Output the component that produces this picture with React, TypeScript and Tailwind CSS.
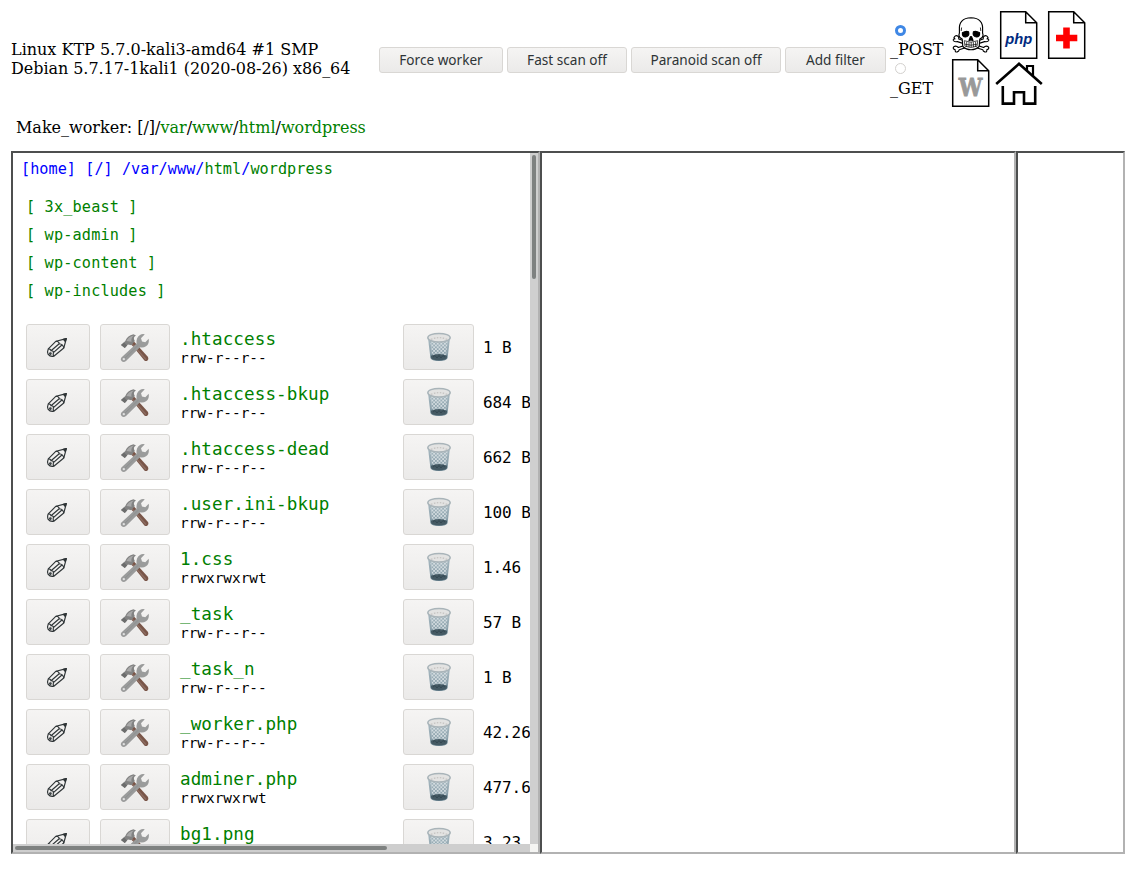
import React from "react";

const serif = "font-['DejaVu_Serif',serif]";
const mono = "font-['DejaVu_Sans_Mono',monospace]";
const face = "rounded-[3px] border border-[#d9d7d4] bg-gradient-to-b from-[#f5f4f3] to-[#ebeae9]";

const folders = ["3x_beast", "wp-admin", "wp-content", "wp-includes"];

const files = [
  { name: ".htaccess", perms: "rrw-r--r--", size: "1 B" },
  { name: ".htaccess-bkup", perms: "rrw-r--r--", size: "684 B" },
  { name: ".htaccess-dead", perms: "rrw-r--r--", size: "662 B" },
  { name: ".user.ini-bkup", perms: "rrw-r--r--", size: "100 B" },
  { name: "1.css", perms: "rrwxrwxrwt", size: "1.46" },
  { name: "_task", perms: "rrw-r--r--", size: "57 B" },
  { name: "_task_n", perms: "rrw-r--r--", size: "1 B" },
  { name: "_worker.php", perms: "rrw-r--r--", size: "42.26" },
  { name: "adminer.php", perms: "rrwxrwxrwt", size: "477.6" },
  { name: "bg1.png", perms: "", size: "3.23" },
];

function Pencil() {
  return (
    <svg className="-ml-0.5 mt-0.5" width="22" height="22" viewBox="0 0 22 22" fill="none" stroke="#2e3436" strokeWidth="1.15" strokeLinejoin="round">
      <path d="M20.3 1.6 L10 4.2 L2.3 11.8 Q1 14.6 2.2 17.4 Q4.2 20 7.8 19.2 L17.8 11 Z" />
      <path d="M10 4.2 Q13.2 4.4 13.2 6.8 Q17 7 17.8 11 M13.2 6.8 L5 13.8 M15.9 8 L7.4 15.6 M2.3 11.8 Q4.8 11.8 5 13.8 Q7.4 13.6 7.4 15.6 Q6.8 17.8 7.8 19.2" />
      <circle cx="4.4" cy="16.6" r="0.8" />
      <path d="M20.3 1.6 L17.4 2.4 L19.3 4.5 Z" fill="#2e3436" />
    </svg>
  );
}

function Tools() {
  return (
    <svg className="mt-px" width="30" height="30" viewBox="0 0 30 30">
      <path d="M11 11 L14 8.5 L28 24 Q29 26 27.5 27.5 Q26 28.7 24.4 27.5 Z" fill="#795548" />
      <path d="M12 11 L26 26.5" stroke="#8d6e63" strokeWidth="1.2" />
      <path d="M1 12 L5.3 8 Q7 3 13.5 1.3 L16 2.6 Q12.5 4.5 14.8 8 L11.4 12.2 L8 11.6 L4.8 15 Z" fill="#828282" />
      <path d="M6.4 8 Q8 3.7 14 2.4 Q10.5 5 11.6 8.7" fill="#a8a8a8" />
      <path d="M1 12 L4 9.4 L7 12.4 L4.8 15 Z" fill="#6c6d6d" />
      <path d="M1.4 24.6 L16.6 10.5 Q15.8 4.8 20 2 Q22 .7 24.8 1.3 L21 5.3 L22 8.6 L25.3 9.3 L28.7 5.7 Q29.6 11 26 13.3 Q23 15.1 20 14.2 L6 28 Q3.7 30 1.5 28 Q0 26.2 1.4 24.6 Z" fill="#9a9b9b" />
      <path d="M4.5 25.6 L18.5 12" stroke="#8e9090" strokeWidth="1" />
      <circle cx="3.8" cy="26.1" r="1.2" fill="#e0e0e0" />
    </svg>
  );
}

function Bin() {
  return (
    <svg width="26" height="30" viewBox="0 0 26 30">
      <defs>
        <linearGradient id="bin-body" x1="0" x2="0" y1="0" y2="1">
          <stop offset="0" stopColor="#a9bac2" />
          <stop offset="0.65" stopColor="#8ea3ad" />
          <stop offset="1" stopColor="#607d8b" />
        </linearGradient>
        <pattern id="bin-mesh" width="3.6" height="3.6" patternUnits="userSpaceOnUse">
          <circle cx="0.9" cy="0.9" r="0.85" fill="#edf1f2" />
          <circle cx="2.7" cy="2.7" r="0.85" fill="#edf1f2" />
        </pattern>
      </defs>
      <path d="M2 6 L4.4 26 Q5.5 29 13 29 Q20.5 29 21.6 26 L24 6 Z" fill="url(#bin-body)" />
      <path d="M4.2 9 L6 23 H20 L21.8 9 Z" fill="url(#bin-mesh)" />
      <path d="M4.9 23.8 Q13 20.4 21.1 23.8 L20.8 26.2 Q19 28.3 13 28.3 Q7 28.3 5.2 26.2 Z" fill="#455a64" />
      <path d="M7 25 L9 23.5 L11 26 L13 23.5 L15 26 L17 23.5 L19 25" fill="none" stroke="#344852" strokeWidth="1" />
      <ellipse cx="13" cy="5.7" rx="11.2" ry="4.3" fill="#e3e3e2" stroke="#a9b4b9" strokeWidth="1.5" />
      <path d="M5 7.4 Q13 3.8 21 7.4" fill="none" stroke="#c8c6c4" strokeWidth="1.4" strokeDasharray="1.5 1.5" />
    </svg>
  );
}

function Skull() {
  return (
    <svg width="48" height="48" viewBox="0 0 48 48" fill="#fff" stroke="#000" strokeWidth="1.15" strokeLinejoin="round">
      <path d="M7 26.6 Q8.5 23.6 11 25.2 Q12 26 11.8 28 L36.6 36.5 Q39 34.1 41.4 35.9 Q42.6 37.9 39.8 38.7 Q40.2 41.5 37.8 40.9 Q36 40.3 35.8 38.7 L10.4 30.6 Q7 31.2 6.3 29.4 Q6 27.6 8 28 Z" />
      <path d="M41 26.6 Q39.5 23.6 37 25.2 Q36 26 36.2 28 L11.4 36.5 Q9 34.1 6.6 35.9 Q5.4 37.9 8.2 38.7 Q7.8 41.5 10.2 40.9 Q12 40.3 12.2 38.7 L37.6 30.6 Q41 31.2 41.7 29.4 Q42 27.6 40 28 Z" />
      <path d="M12.4 19 Q11.5 7.2 24 6.8 Q36.5 7.2 35.6 19 Q35.3 22 36.1 24 Q36 26.8 32.8 28 L32.2 35.5 Q29 38.7 24 38.7 Q19 38.7 15.8 35.5 L15.2 28 Q12 26.8 11.9 24 Q12.7 22 12.4 19 Z" />
      <path d="M15.4 21.8 Q19 19.6 21.6 20.8 Q22.8 25 18.6 26 Q15 26 15.4 21.8 Z M32.6 21.8 Q29 19.6 26.4 20.8 Q25.2 25 29.4 26 Q33 26 32.6 21.8 Z M23.5 25.5 L22 29.4 L23.5 29.1 Z M24.5 25.5 L26 29.4 L24.5 29.1 Z" fill="#000" />
      <path d="M17.2 29.7 Q24 32.7 30.8 29.7 L30 35.2 Q24 37.7 18 35.2 Z M18 33.2 Q24 35.2 30 33.2 M19.7 30.7 V35.8 M22 31.2 V36.2 M24.2 31.2 V36.2 M26.4 31.2 V36.2 M28.6 30.7 V35.7" strokeWidth="0.7" />
      <path d="M14.6 16.5 L14.2 20 M33.4 16.5 L33.8 20" strokeWidth="0.8" />
    </svg>
  );
}

function Doc({ children }: { children: React.ReactNode }) {
  return (
    <svg width="48" height="48" viewBox="0 0 48 48">
      <path d="M5.7 0.8 H30.7 L41.7 11.8 V47.2 H5.7 Z M30.7 0.8 V11.8 H41.7" fill="#fff" stroke="#000" strokeWidth="1.5" />
      {children}
    </svg>
  );
}

function House() {
  return (
    <svg width="48" height="48" viewBox="0 0 48 48" fill="none" stroke="#000" strokeWidth="2.6">
      <path d="M1.2 25 L24 4.8 L46.8 25" />
      <path d="M7.8 27 V44.6 H19 V33.2 H29 V44.6 H40.2 V27" />
      <path d="M32 11 V7 H38 V17" strokeWidth="2.2" />
    </svg>
  );
}

function ToolbarButton({ className, children }: { className: string; children: React.ReactNode }) {
  return (
    <button className={`${face} h-[26px] shrink-0 whitespace-nowrap text-center font-['Noto_Sans',sans-serif] text-[13.6px] leading-6 text-[#2e3436] ${className}`}>
      {children}
    </button>
  );
}

const paneEdge = "border-2 border-t-[#4d4f4f] border-l-[#4d4f4f] border-b-[#b2b2b2] border-r-[#b2b2b2]";

export default function App() {
  return (
    <div className="h-[869px] w-[1132px] overflow-hidden bg-white pl-[11px] pt-[11px] text-black">
      <header className={`flex h-24 items-center text-base leading-[19px] ${serif}`}>
        <div className="w-[368px] shrink-0 whitespace-nowrap">
          Linux KTP 5.7.0-kali3-amd64 #1 SMP
          <br />
          <span className="tracking-[-0.05px]">Debian 5.7.17-1kali1 (2020-08-26) x86_64</span>
        </div>
        <div className="flex w-[511px] shrink-0 gap-1 pt-px">
          <ToolbarButton className="w-[124px]">Force worker</ToolbarButton>
          <ToolbarButton className="w-[120px]">Fast scan off</ToolbarButton>
          <ToolbarButton className="w-[150px]">Paranoid scan off</ToolbarButton>
          <ToolbarButton className="w-[101px]">Add filter</ToolbarButton>
        </div>
        <div className="flex w-[57px] shrink-0 flex-col">
          <span className="ml-[5px] mt-1 flex h-[15px] items-center">
            <span className="size-[11px] rounded-full border-[3.5px] border-[#3f87e5] bg-white" />
          </span>
          <span className="h-[23px] leading-[23px]">_POST</span>
          <span className="ml-[5px] flex h-4 items-center">
            <span className="size-[11px] rounded-full border border-[#d3d1ce] bg-white" />
          </span>
          <span className="h-[23px] leading-[23px]">_GET</span>
        </div>
        <div className="grid w-36 shrink-0 grid-cols-3">
          <Skull />
          <Doc>
            <text x="10.3" y="32.6" textLength="27" lengthAdjust="spacingAndGlyphs" className="fill-[#002a7f] font-['Liberation_Sans',sans-serif] text-[15.4px] font-bold italic">php</text>
          </Doc>
          <Doc>
            <path d="M20.2 16.5 H26.8 V23.7 H34.3 V30.3 H26.8 V37.5 H20.2 V30.3 H13 V23.7 H20.2 Z" fill="#f00" />
          </Doc>
          <Doc>
            <text x="11.8" y="37" textLength="23.6" lengthAdjust="spacingAndGlyphs" strokeWidth="0.9" className="fill-[#999] stroke-[#999] font-['DejaVu_Serif',serif] text-[25px] font-bold">W</text>
          </Doc>
          <House />
        </div>
      </header>

      <div className={`ml-[5px] mt-[11px] h-[33px] whitespace-nowrap text-base leading-[19px] tracking-[-0.01px] text-[#008000] ${serif}`}>
        <span className="text-black">Make_worker: [/]/</span>var<span className="text-black">/</span>www<span className="text-black">/</span>html<span className="text-black">/</span>wordpress
      </div>

      <main className="flex h-[703px]">
        <section className={`flex w-[529px] shrink-0 flex-col ${paneEdge}`}>
          <div className="flex h-[691px]">
            <div className={`w-[517px] shrink-0 overflow-hidden text-[#008000] ${mono}`}>
              <div className="ml-2 mt-1.5 h-5 whitespace-pre text-[15.2px] leading-5 tracking-[0.03px] text-[#0000ff]">
                {"[home] [/] /var/www/"}<span className="text-[#008000]">html</span>/<span className="text-[#008000]">wordpress</span>
              </div>
              <ul className="ml-[13px] mt-3.5 text-[15.2px] leading-7 tracking-[0.16px]">
                {folders.map((f) => (
                  <li key={f} className="h-7 whitespace-pre">[ {f} ]</li>
                ))}
              </ul>
              <div className="ml-[13px] mt-[19px] flex w-[600px] flex-col gap-[9px]">
                {files.map((f) => (
                  <div key={f.name} className="flex h-[46px] items-center">
                    <button className={`${face} mr-2.5 flex h-[46px] w-16 items-center justify-center`}><Pencil /></button>
                    <button className={`${face} mr-[10px] flex h-[46px] w-[70px] items-center justify-center`}><Tools /></button>
                    <div className="w-[223px] whitespace-nowrap pt-0.5">
                      <div className="h-[21px] text-[17.6px] leading-[21px] tracking-[0.08px]">{f.name}</div>
                      <div className="h-[17px] text-[14.4px] leading-[17px] text-black">{f.perms}</div>
                    </div>
                    <button className={`${face} mr-[9px] flex h-[46px] w-[71px] items-center justify-center`}><Bin /></button>
                    <span className="pt-0.5 text-base leading-5 tracking-[-0.1px] text-black">{f.size}</span>
                  </div>
                ))}
              </div>
            </div>
            <div className="w-2 shrink-0 bg-[#cfcfcf] pl-0.5 pt-0.5">
              <div className="h-[124px] w-1 rounded-full bg-[#7e8180]" />
            </div>
          </div>
          <div className="flex h-2 bg-[#cecece] pl-0.5 pt-0.5">
            <div className="h-1 w-[372px] rounded-full bg-[#7e8180]" />
            <div className="-mt-0.5 ml-auto h-2 w-2 bg-[#f4f4f2]" />
          </div>
        </section>
        <section className={`w-[476px] shrink-0 ${paneEdge}`} />
        <section className={`w-[109px] shrink-0 ${paneEdge}`} />
      </main>
    </div>
  );
}
